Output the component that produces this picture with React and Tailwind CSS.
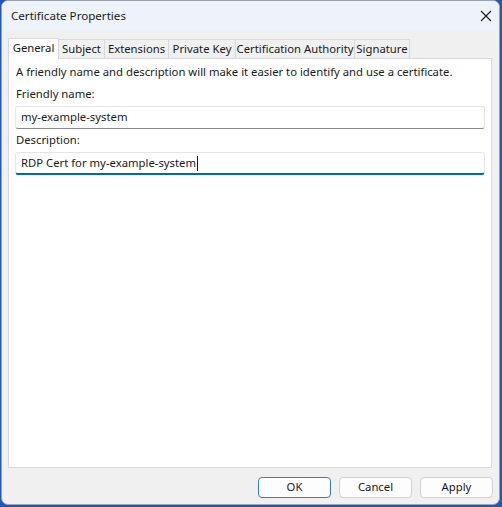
import React from 'react';

const tabs = [
  { label: 'General', w: 'w-[51px]' },
  { label: 'Subject', w: 'w-[46px]' },
  { label: 'Extensions', w: 'w-[64px]' },
  { label: 'Private Key', w: 'w-[67px]' },
  { label: 'Certification Authority', w: 'w-[119px]' },
  { label: 'Signature', w: 'w-[55px]' },
];

const Button = ({ children, primary }) => (
  <button
    className={`w-[73px] h-[21px] rounded-[4px] bg-[#fdfdfd] text-[11.3px] text-[#1a1a1a] flex items-center justify-center border ${
      primary ? 'border-[#2f7fd0]' : 'border-[#d0d0d0]'
    }`}
  >
    {children}
  </button>
);

export default function App() {
  return (
    <div className="w-[502px] h-[507px] bg-[#2456b5] pl-px pr-[2px] pb-[2px] overflow-hidden">
      <div
        className="w-full h-full rounded-[7px] border border-[#9aa3ad] bg-[#f0f0f0] flex flex-col overflow-hidden text-[#1a1a1a] text-[11.3px]"
        style={{ fontFamily: '"Segoe UI", "Noto Sans", sans-serif' }}
      >
        {/* Title bar */}
        <div className="h-[30px] shrink-0 bg-[#eef3f9] flex items-center justify-between pl-[9px] pr-[7px]">
          <span className="text-[11.6px]">Certificate Properties</span>
          <svg width="12" height="12" viewBox="0 0 12 12">
            <path d="M1 1 L11 11 M11 1 L1 11" stroke="#1a1a1a" strokeWidth="1.1" />
          </svg>
        </div>

        {/* Tabs + panel */}
        <div className="flex-1 flex flex-col pl-[6px] pr-[6px] pt-[6px]">
          <div className="flex items-end h-[21px] relative z-10 whitespace-nowrap">
            {tabs.map((t, i) =>
              i === 0 ? (
                <div
                  key={t.label}
                  className={`${t.w} h-[21px] bg-white border border-b-0 border-[#d9d9d9] flex items-start justify-center pt-[1px] -mb-px`}
                >
                  {t.label}
                </div>
              ) : (
                <div
                  key={t.label}
                  className={`${t.w} h-[19px] bg-[#f0f0f0] border border-l-0 border-b-0 border-[#d9d9d9] flex items-center justify-center`}
                >
                  {t.label}
                </div>
              )
            )}
          </div>
          <div className="h-[410px] mr-px bg-white border border-[#d9d9d9] px-[7px] pt-[3px]">
            <p className="leading-[20px] mb-[2px]">
              A friendly name and description will make it easier to identify and use a certificate.
            </p>
            <p className="leading-[20px]">Friendly name:</p>
            <div className="mt-[2px] -mx-[1px] h-[23px] border border-[#e5e5e5] border-b-[#8a8a8a] rounded-[3px] flex items-center px-[5px]">
              my-example-system
            </div>
            <p className="leading-[20px] mt-[1px]">Description:</p>
            <div className="mt-[2px] -mx-[1px] h-[23px] border border-[#e5e5e5] border-b-2 border-b-[#0067c0] rounded-[3px] flex items-center px-[5px]">
              <span>RDP Cert for my-example-system</span>
              <span className="w-px h-[15px] bg-[#1a1a1a] ml-px" />
            </div>
          </div>

          {/* Buttons */}
          <div className="flex justify-end gap-[8px] pt-[9px]">
            <Button primary>OK</Button>
            <Button>Cancel</Button>
            <Button>Apply</Button>
          </div>
        </div>
      </div>
    </div>
  );
}
